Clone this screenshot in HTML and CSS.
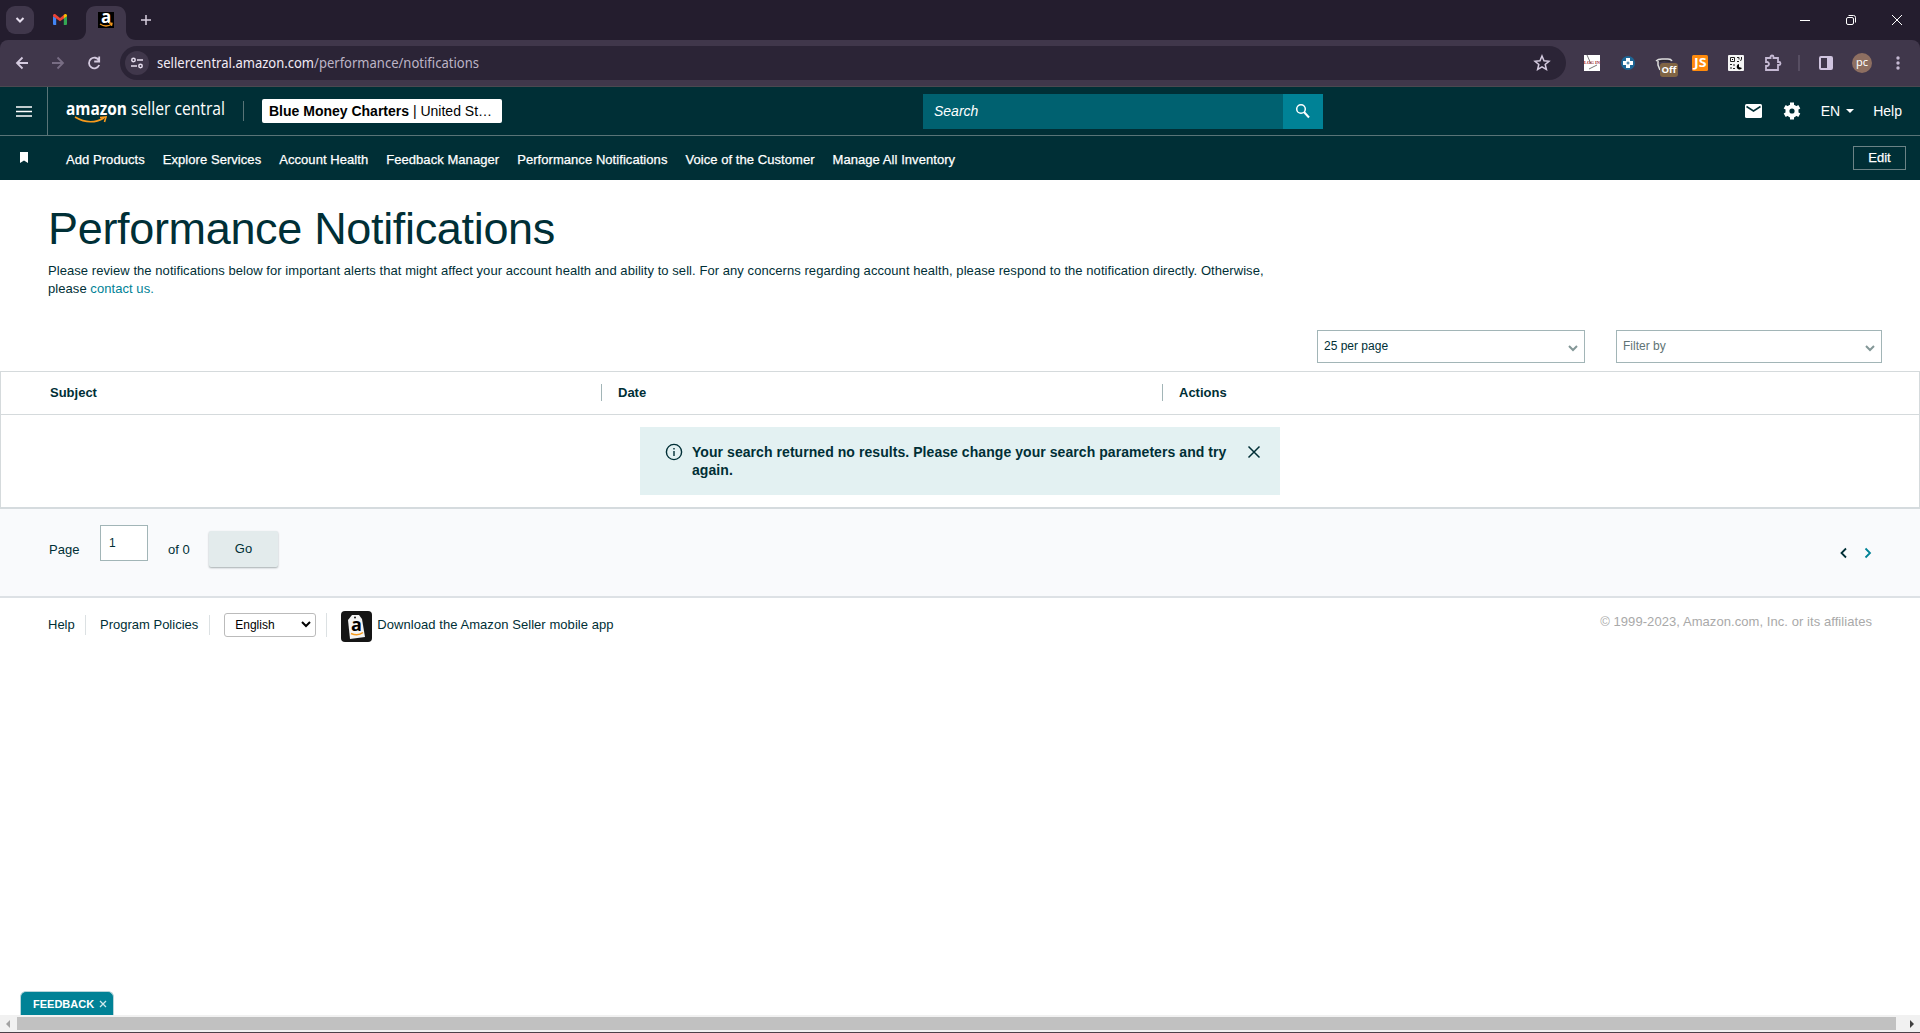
FILE: index.html
```html
<!DOCTYPE html>
<html lang="en">
<head>
<meta charset="utf-8">
<title>Performance Notifications</title>
<link rel="stylesheet" href="styles.css">
</head>
<body>
<div class="tabs">
  <div class="tab-search"><svg width="28" height="28" fill="none" stroke="#e6deee" stroke-width="2"><path d="M10.500 12l3.500 3.500 3.500-3.500"/></svg></div>
  <svg class="gmail" width="14" height="11" viewBox="0 0 14 11"><path fill="#4285f4" d="M0 2v8a1 1 0 0 0 1 1h2.200V4.300z"/><path fill="#34a853" d="M10.800 4.300V11H13a1 1 0 0 0 1-1V2z"/><path fill="#ea4335" d="M0 1.800C0 .2 1.500-.4 2.700.5L7 3.900 11 .8v3.600L7 7.300 0 2.300z"/><path fill="#fbbc04" d="M10.800.7C12-.4 14 0 14 1.700v.6l-3.200 2.300z"/></svg>
  <svg class="active-tab" width="60" height="34" viewBox="0 0 60 34"><path fill="#40374b" d="M0 34c6 0 10-4 10-10V10C10 4 14 0 20 0h20c6 0 10 4 10 10v14c0 6 4 10 10 10z"/><path d="M22 6h16v16H22z"/><text x="25" y="17" font-family="Open Sans, sans-serif" font-size="17" font-weight="700" fill="#fff">a</text><path d="M24 18q6 4 12 0M33 17l3 .3-.5 2.500" fill="none" stroke="#f79a1c" stroke-width="1.300"/></svg>
  <svg class="plus" width="12" height="12" stroke="#d8cfe0" stroke-width="1.500"><path d="M6 1v10M1 6h10"/></svg>
  <svg class="window" width="104" height="16" fill="none" stroke="#fff" stroke-width="1"><path d="M0 8.500h10M92 3l10 10M102 3L92 13"/><rect x="46.500" y="5.500" width="7" height="7" rx="1.500"/><path d="M48.500 3.500h5a2 2 0 0 1 2 2v5"/></svg>
</div>
<div class="toolbar-frame"><div class="toolbar">
  <svg class="history" width="84" height="16" fill="none" stroke="#d5cbe0" stroke-width="1.800"><path d="M12 8H1M6.500 2.500L1 8l5.500 5.500"/><path stroke="#786d84" d="M36 8h11M41.500 2.500L47 8l-5.500 5.500"/><path d="M83 5.500A5.300 5.300 0 1 0 83.200 10M83.200 1.500v5h-5"/></svg>
  <div class="omnibox">
    <span class="site"><svg width="14" height="12" fill="none" stroke="#e6deee" stroke-width="1.500"><circle cx="3.500" cy="3" r="1.700"/><path d="M7 3h6M1 9h6"/><circle cx="10.500" cy="9" r="1.700"/></svg></span>
    <svg class="url" width="324" height="24"><text y="17" textLength="322" lengthAdjust="spacingAndGlyphs" font-size="14"><tspan fill="#f1ebf5">sellercentral.amazon.com</tspan><tspan fill="#bdb4c6">/performance/notifications</tspan></text></svg>
    <svg class="star" width="18" height="18" fill="none" stroke="#d5cbe0" stroke-width="1.500"><path d="M9 2l2 4.700 5 .5-3.800 3.300 1.200 5L9 12.800l-4.400 2.700 1.200-5L2 7.200l5-.5z"/></svg>
  </div>
  <div class="extensions">
    <svg width="16" height="16"><path fill="#fff" d="M0 0h16v16H0z"/><path d="M3 0l4 9M5 14l8-4" stroke="#777" fill="none"/><text x="0" y="8.500" textLength="16" lengthAdjust="spacingAndGlyphs" font-family="Liberation Serif, serif" font-weight="700" font-size="5" fill="#a02530">LOG IN</text></svg>
    <svg width="16" height="16"><circle cx="8" cy="8" r="7" fill="#1d6696"/><path d="M8 3v10M3 8h10" stroke="#fff" stroke-width="4"/><path d="M8 6.500v3M6.500 8h3" stroke="#1d6696"/></svg>
    <div class="off-icon"><svg width="16" height="16" fill="none" stroke="#ddd" stroke-width="1.500"><path d="M0 6q2-2 6-2h6q3 0 4 2"/><path stroke="#222" stroke-width="1" d="M3 6.500q5-2 11 0"/><path d="M2 6v4l2 5"/></svg><span>Off</span></div>
    <svg width="16" height="16"><rect width="16" height="16" rx="1.500" fill="#ff8a0c"/><text x="2" y="12" font-family="Open Sans, sans-serif" font-weight="700" font-size="12" textLength="12.500" lengthAdjust="spacingAndGlyphs" fill="#fff">JS</text></svg>
    <svg width="16" height="16"><rect width="16" height="16" rx="1" fill="#f5f5f5"/><path d="M2.500 2.500h4v4h-4zM9 2.500h2v2M13.500 2v2l-1 2M9 6.500h2M2 9.500h2M6 9v2M3 12v2M5 13.500h2" fill="none" stroke="#222"/><path d="M4 4h1v1H4zM11 9a2.800 2.800 0 1 0 3 4l-3-1z"/></svg>
    <svg width="18" height="18" fill="none" stroke="#c5b9d3" stroke-width="1.800"><path d="M2 4h4.500V3a1.500 1.500 0 0 1 3 0v1H14v4h1a1.500 1.500 0 0 1 0 3h-1v5H2v-4h1a2 2 0 0 0 0-4H2z"/></svg>
    <i class="ext-divider"></i>
    <svg class="panel" width="14" height="14"><rect x="1" y="1" width="12" height="12" rx="1" fill="none" stroke="#d0c4df" stroke-width="2"/><path fill="#d0c4df" d="M8 1h5v12H8z"/></svg>
    <span class="avatar">pc</span>
    <svg class="menu-dots" width="4" height="16" fill="#c5b9d3"><circle cx="2" cy="3" r="1.700"/><circle cx="2" cy="8" r="1.700"/><circle cx="2" cy="13" r="1.700"/></svg>
  </div>
</div></div>
<header class="header">
  <div class="burger"><svg width="16" height="11" stroke="#fff" stroke-width="1.700"><path d="M0 1h16M0 5.500h16M0 10h16"/></svg></div>
  <svg class="logo" width="162" height="30" fill="#fff"><text x="0" y="16" font-size="18" font-weight="700" font-family="Open Sans, sans-serif" textLength="61" lengthAdjust="spacingAndGlyphs">amazon</text><text x="65" y="16" font-size="18.500" font-family="Open Sans, sans-serif" textLength="94" lengthAdjust="spacingAndGlyphs">seller central</text><path d="M9 18q15 9 29 1M34 18.500l6-.5-1.500 5" fill="none" stroke="#f79a1c" stroke-width="1.600"/></svg>
  <i class="logo-divider"></i>
  <div class="account"><b>Blue Money Charters</b> | United St…</div>
  <div class="search"><span>Search</span><button><svg width="16" height="16" fill="none" stroke="#fff"><circle cx="6" cy="6" r="4.300" stroke-width="1.500"/><path d="M9 9l5 5.500" stroke-width="2"/></svg></button></div>
  <div class="header-links">
    <svg width="17" height="14"><rect width="17" height="14" rx="1.500" fill="#fff"/><path d="M1.500 2.500l7 4.500 7-4.500" fill="none" stroke="#002f36" stroke-width="1.500"/></svg>
    <svg class="gear" width="18" height="18" viewBox="0 0 18 18"><circle cx="9" cy="9" r="4.600" fill="none" stroke="#fff" stroke-width="4"/><path d="M9 .5v4M9 13.500v4M1.700 4.800l3 1.700M13.300 11.500l3 1.700M1.700 13.200l3-1.700M13.300 6.500l3-1.700" stroke="#fff" stroke-width="4"/></svg>
    <span class="lang">EN</span><svg class="caret" width="8" height="4" fill="#fff"><path d="M0 0h8L4 4z"/></svg><span class="help">Help</span>
  </div>
</header>
<nav class="nav">
  <svg class="bookmark" width="8" height="11" fill="#fff"><path d="M0 0h8v11L4 8.500 0 11z"/></svg>
  <div class="links"><a>Add Products</a><a>Explore Services</a><a>Account Health</a><a>Feedback Manager</a><a>Performance Notifications</a><a>Voice of the Customer</a><a>Manage All Inventory</a></div>
  <div class="edit">Edit</div>
</nav>
<main>
  <section class="intro">
    <h1>Performance Notifications</h1>
    <p>Please review the notifications below for important alerts that might affect your account health and ability to sell. For any concerns regarding account health, please respond to the notification directly. Otherwise,<br>please <a>contact us.</a></p>
  </section>
  <div class="filters">
    <div class="drop per-page">25 per page<svg width="10" height="7" fill="none" stroke="#839797" stroke-width="2"><path d="M1 1l4 4 4-4"/></svg></div>
    <div class="drop filter-by">Filter by<svg width="10" height="7" fill="none" stroke="#839797" stroke-width="2"><path d="M1 1l4 4 4-4"/></svg></div>
  </div>
  <section class="table">
    <div class="head"><b>Subject</b><b>Date</b><b>Actions</b></div>
    <div class="rows"><div class="alert">
      <svg width="18" height="18" fill="none" stroke="#002f36" stroke-width="1.400"><circle cx="9" cy="9" r="7.600"/><path d="M9 8v5M9 5v1.500"/></svg>
      <p>Your search returned no results. Please change your search parameters and try<br>again.</p>
      <svg width="12" height="12" stroke="#002f36" stroke-width="1.500"><path d="M.5.5l11 11M11.500.5l-11 11"/></svg>
    </div></div>
  </section>
  <section class="pager">
    <span class="page-label">Page</span><span class="page-input">1</span><span class="page-total">of 0</span><button class="go">Go</button>
    <svg width="32" height="12" fill="none" stroke-width="1.800"><path stroke="#002f36" d="M6 1.500L1.500 6 6 10.500"/><path stroke="#008296" d="M25.500 1.500L30 6l-4.500 4.500"/></svg>
  </section>
  <footer>
    <a class="f-help">Help</a><a class="f-policies">Program Policies</a>
    <div class="f-lang"><span>English<svg width="10" height="7" fill="none" stroke="#000" stroke-width="2"><path d="M1 1l4 4 4-4"/></svg></span></div>
    <svg class="app" width="31" height="31"><rect width="31" height="31" rx="4" fill="#151515"/><path d="M7 9l4-5 7 0 3 4 3 18-15 2z" fill="#f4f4f4"/><circle cx="14" cy="6.500" r="1" fill="#151515"/><text x="10" y="20" font-family="Open Sans, sans-serif" font-weight="700" font-size="18">a</text><path d="M10 22.500q7 3 12-1" stroke="#f79a1c" stroke-width="1.500" fill="none"/></svg>
    <span class="download">Download the Amazon Seller mobile app</span>
    <span class="copyright">© 1999-2023, Amazon.com, Inc. or its affiliates</span>
  </footer>
</main>
<div class="feedback">FEEDBACK<svg width="8" height="8" stroke="#cfe9ec" stroke-width="1.300"><path d="M1 1l6 6M7 1L1 7"/></svg></div>
<div class="scrollbar"><svg width="4" height="8" fill="#a3a3a3"><path d="M4 0v8L0 4z"/></svg><i></i><svg width="4" height="8" fill="#404040"><path d="M0 0v8l4-4z"/></svg></div>
</body>
</html>
```
FILE: styles.css
```css
* { box-sizing: border-box; }
body { margin: 0; height: 1033px; overflow: hidden; display: flex; flex-direction: column; position: relative; background: #fff; color: #002f36; font: 13px "Liberation Sans", Arial, sans-serif; }
svg { display: block; flex: none; overflow: visible; }
h1, p { margin: 0; font-weight: 400; }
button { border: 0; padding: 0; font: inherit; color: inherit; }
.tabs { flex: none; height: 40px; background: #241d2e; display: flex; align-items: flex-start; padding: 6px 16px 0 6px; }
.tab-search { width: 28px; height: 28px; border-radius: 9px; background: #40374b; }
.gmail { margin: 8px 0 0 19px; }
.active-tab { margin-left: 9px; }
.plus { margin: 8px 0 0 4px; }
.window { margin: 6px 0 0 auto; }
.toolbar-frame { flex: none; height: 47px; background: #241d2e; border-bottom: 1px solid #4b4850; }
.toolbar { height: 46px; background: #40374b; border-radius: 8px 8px 0 0; display: flex; align-items: flex-start; }
.history { margin: 15px 0 0 16px; }
.omnibox { margin: 6px 0 0 20px; width: 1446px; height: 34px; border-radius: 17px; background: #2b2436; display: flex; align-items: center; padding: 0 15px 0 5px; }
.site { width: 24px; height: 24px; border-radius: 12px; background: #40374b; display: flex; align-items: center; justify-content: center; }
.url { margin-left: 8px; font-family: "Noto Sans", sans-serif; }
.star { margin-left: auto; }
.extensions { display: flex; align-items: center; height: 46px; margin-left: 18px; gap: 20px; }
.off-icon { position: relative; width: 16px; }
.off-icon span { position: absolute; left: 4px; top: 8px; width: 18px; height: 14px; border-radius: 3px; background: #806444; color: #fff; font: 700 9.5px/14px "Open Sans", sans-serif; text-align: center; }
.ext-divider { width: 2px; height: 16px; background: #574e62; margin: 0 0 0 -4px; }
.panel { margin-left: -1px; }
.avatar { width: 20px; height: 20px; border-radius: 10px; background: #8e6f61; color: #fff; font: 11px/17px "Noto Sans", sans-serif; text-align: center; margin-left: -1px; }
.menu-dots { margin-left: 4px; }
.header { flex: none; height: 49px; background: #002f36; border-bottom: 1px solid #597477; display: flex; align-items: center; color: #fff; }
.burger { width: 48px; height: 48px; border-right: 1px solid #597477; display: flex; align-items: center; justify-content: center; }
.logo { margin-left: 18px; margin-top: 6px; }
.logo-divider { width: 1px; height: 20px; background: #597477; margin-left: 15px; }
.account { margin-left: 18px; width: 240px; height: 24px; border-radius: 2px; background: #fff; color: #000; padding-left: 7px; font-size: 14px; line-height: 24px; white-space: nowrap; }
.search { width: 400px; height: 35px; margin-left: 421px; background: #006170; display: flex; align-items: center; justify-content: space-between; padding-left: 11px; font-size: 14px; font-style: italic; }
.search button { width: 40px; height: 35px; background: #008296; display: flex; align-items: center; justify-content: center; }
.header-links { display: flex; align-items: center; margin-left: auto; padding-right: 18px; font-size: 14px; }
.gear { margin-left: 21px; }
.lang { margin-left: 20px; }
.caret { margin-left: 6px; }
.help { margin-left: 19px; }
.nav { flex: none; height: 44px; background: #002f36; color: #fff; display: flex; align-items: center; padding: 0 14px 0 20px; }
.bookmark { margin-top: -1px; }
.links { display: flex; gap: 18px; margin-left: 38px; margin-top: 3px; letter-spacing: .058px; -webkit-text-stroke: .25px #fff; }
.edit { margin-left: auto; width: 53px; height: 24px; border: 1px solid #6c8386; text-align: center; line-height: 22px; -webkit-text-stroke: .25px #fff; }
main { flex: 1; min-height: 0; }
.intro { height: 150px; padding: 23px 48px 0; }
h1 { font-size: 45px; line-height: 52px; letter-spacing: -.33px; }
.intro p { margin-top: 7px; font-size: 13px; line-height: 18px; letter-spacing: .06px; white-space: nowrap; }
.intro a { color: #008296; }
.filters { height: 41px; display: flex; justify-content: flex-end; gap: 31px; padding-right: 38px; }
.drop { width: 268px; height: 33px; border: 1px solid #a2b5b7; padding: 3px 6px 4px; display: flex; justify-content: space-between; align-items: center; font-size: 12px; }
.drop svg { margin-top: 4px; }
.filter-by { width: 266px; color: #607475; }
.table { height: 138px; border: 1px solid #d5dadc; border-bottom: 2px solid #d5dbde; }
.head { height: 43px; border-bottom: 1px solid #d5dadc; display: grid; grid-template-columns: 600px 561px 1fr; align-items: center; padding-bottom: 2px; }
.head b { padding-left: 16px; border-left: 1px solid #a2b5b7; line-height: 17px; }
.head b:first-child { padding-left: 49px; border: 0; }
.rows { padding-top: 12px; display: flex; justify-content: center; }
.alert { width: 640px; height: 68px; background: #e3f1f2; display: flex; padding: 16px 20px 0 25px; }
.alert p { margin: 0 auto 0 9px; font-size: 14px; line-height: 18px; font-weight: 700; letter-spacing: .062px; }
.alert svg:last-child { margin-top: 3px; }
.pager { height: 89px; background: #f9fafc; border-bottom: 2px solid #dde1e5; display: flex; padding: 16px 48px 0 49px; align-items: flex-start; }
.page-label { width: 51px; margin-top: 17px; }
.page-input { width: 48px; height: 36px; border: 1px solid #a2b5b7; background: #fff; padding: 10px 0 0 8px; font-size: 12px; }
.page-total { margin: 17px 0 0 20px; width: 40px; }
.go { width: 69px; height: 36px; margin: 6px 0 0 1px; padding-bottom: 1px; background: #e3ebec; border-radius: 2px; box-shadow: 0 1px 2px #a5adaf; }
.pager svg { margin: 22px 0 0 auto; }
footer { display: flex; height: 53px; align-items: center; padding: 0 48px; }
.f-help { width: 38px; height: 20px; line-height: 20px; border-right: 1px solid #dce1e3; }
.f-policies { padding: 0 11px 0 14px; line-height: 20px; border-right: 1px solid #dce1e3; }
.f-lang { width: 117px; height: 24px; border-right: 1px solid #dce1e3; padding-left: 14px; }
.f-lang span { width: 92px; height: 24px; border: 1px solid #bbb; border-radius: 3px; display: flex; align-items: center; justify-content: space-between; padding: 0 4px 0 10px; font-size: 12px; color: #000; }
.app { margin: 3px 0 0 14px; }
.download { margin-left: 5px; letter-spacing: .06px; }
.copyright { margin-left: auto; color: #a9a9a9; margin-top: -6px; letter-spacing: .065px; }
.feedback { position: absolute; left: 20px; top: 991px; width: 94px; height: 24px; background: #008296; border: 1px solid #b8d5da; border-bottom: 0; border-radius: 6px 6px 0 0; color: #fff; font-size: 11px; font-weight: 700; display: flex; align-items: center; padding-left: 12px; gap: 5px; }
.scrollbar { flex: none; height: 18px; background: #f1f1f1; border-bottom: 1px solid #4b4048; display: flex; align-items: center; padding: 0 6px; }
.scrollbar i { height: 13px; width: 1879px; margin: 0 14px 0 7px; background: #c1c1c1; }
```
